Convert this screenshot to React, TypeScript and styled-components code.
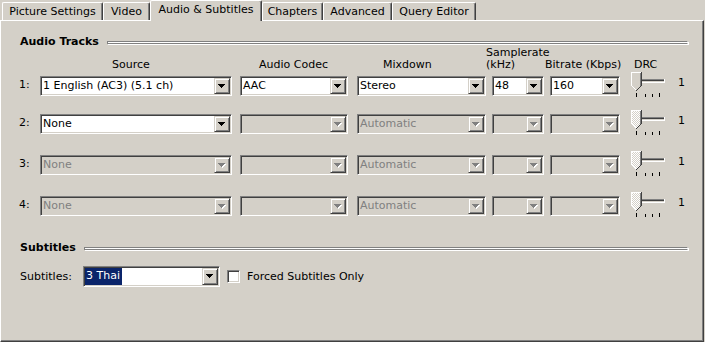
import React, { useId } from 'react';
import styled, { createGlobalStyle } from 'styled-components';

const Global = createGlobalStyle`
  html, body { margin: 0; padding: 0; background: #D4D0C8; }
  body {
    font-family: "DejaVu Sans", Verdana, sans-serif;
    font-size: 11px;
    color: #000;
  }
`;

const Window = styled.div`
  width: 705px;
  height: 342px;
  background: #D4D0C8;
  display: flex;
  flex-direction: column;
  overflow: hidden;
`;

const TabStrip = styled.div`
  display: flex;
  align-items: flex-start;
  height: 20px;
  padding-left: 2px;
  position: relative;
  z-index: 2;
`;

const Tab = styled.div<{ $w: number; $active?: boolean }>`
  box-sizing: border-box;
  width: ${p => p.$w}px;
  height: ${p => (p.$active ? 21 : 18)}px;
  margin-top: ${p => (p.$active ? 0 : 2)}px;
  background: #D4D0C8;
  border-top: 1px solid #fff;
  border-left: 1px solid #fff;
  border-right: 1px solid #404040;
  border-top-left-radius: 2px;
  border-top-right-radius: 2px;
  box-shadow: inset -1px 0 0 #808080;
  padding-top: 1px;
  line-height: 16px;
  text-align: center;
  white-space: nowrap;
`;

const Panel = styled.div`
  box-sizing: border-box;
  width: 704px;
  height: 322px;
  border-top: 1px solid #fff;
  border-left: 1px solid #fff;
  border-right: 1px solid #404040;
  border-bottom: 1px solid #404040;
  box-shadow: inset -1px -1px 0 #808080;
  padding: 15px 15px 0 18px;
  display: flex;
  flex-direction: column;
`;

const SectionHead = styled.div<{ $mt?: number }>`
  display: flex;
  align-items: center;
  height: 12px;
  margin-left: 1px;
  margin-top: ${p => p.$mt ?? 0}px;
`;

const SectionTitle = styled.span`
  font-weight: bold;
  line-height: 12px;
  white-space: nowrap;
`;

const Groove = styled.div`
  flex: 1;
  height: 1px;
  margin-left: 8px;
  background: #fff;
  border: 1px solid #808080;
  border-right-color: #fff;
  box-shadow: 1px 1px 0 #fff;
`;

const TrackGrid = styled.div<{ $mt: number; $header?: boolean }>`
  display: grid;
  grid-template-columns: 21px 200px 117px 135px 58px 81px 47px auto;
  align-items: ${p => (p.$header ? 'end' : 'start')};
  margin-top: ${p => p.$mt}px;
  height: ${p => (p.$header ? 24 : 20)}px;
`;

const ColHead = styled.div<{ $dx: number }>`
  margin-left: ${p => p.$dx}px;
  line-height: 12px;
  white-space: nowrap;
`;

const RowLabel = styled.div`
  line-height: 17px;
  white-space: nowrap;
`;

const ComboFrame = styled.div<{ $w: number; $h?: number }>`
  box-sizing: border-box;
  width: ${p => p.$w}px;
  height: ${p => p.$h ?? 20}px;
  display: flex;
  padding: 1px;
  border: 1px solid;
  border-color: #808080 #fff #fff #808080;
  box-shadow: inset 1px 1px 0 #404040, inset -1px -1px 0 #D4D0C8;
`;

const ComboField = styled.div<{ $disabled?: boolean; $lh: number }>`
  flex: 1;
  min-width: 0;
  overflow: hidden;
  white-space: nowrap;
  background: ${p => (p.$disabled ? '#D4D0C8' : '#fff')};
  color: ${p => (p.$disabled ? '#808080' : '#000')};
  line-height: ${p => p.$lh}px;
  padding-left: 1px;
`;

const Highlight = styled.span`
  display: inline-block;
  height: 100%;
  background: #0A246A;
  color: #fff;
  padding: 0 2px 0 1px;
  margin-left: -1px;
`;

const DropButton = styled.div`
  box-sizing: border-box;
  width: 16px;
  flex: none;
  background: #D4D0C8;
  border: 1px solid;
  border-color: #D4D0C8 #404040 #404040 #D4D0C8;
  box-shadow: inset 1px 1px 0 #fff, inset -1px -1px 0 #808080;
  display: flex;
  align-items: center;
  justify-content: center;
  svg { display: block; }
`;

const SliderBox = styled.div`
  height: 20px;
  svg { display: block; margin-top: -4px; }
`;

const ValueText = styled.div`
  line-height: 14px;
`;

const SubRow = styled.div`
  display: flex;
  align-items: center;
  margin-top: 12px;
  margin-left: 1px;
`;

const SubLabel = styled.div`
  width: 63px;
  white-space: nowrap;
  line-height: 17px;
`;

const CheckBox = styled.div`
  box-sizing: border-box;
  width: 13px;
  height: 13px;
  margin-left: 7px;
  background: #fff;
  border: 1px solid;
  border-color: #808080 #fff #fff #808080;
  box-shadow: inset 1px 1px 0 #404040, inset -1px -1px 0 #D4D0C8;
`;

const CheckText = styled.span`
  margin-left: 7px;
  white-space: nowrap;
`;

const Arrow = ({ disabled }: { disabled?: boolean }) => (
  <svg width="8" height="5" viewBox="0 0 8 5" shapeRendering="crispEdges">
    {disabled && (
      <g fill="#fff">
        <rect x="1" y="1" width="7" height="1" />
        <rect x="2" y="2" width="5" height="1" />
        <rect x="3" y="3" width="3" height="1" />
        <rect x="4" y="4" width="1" height="1" />
      </g>
    )}
    <g fill={disabled ? '#808080' : '#000'}>
      <rect x="0" y="0" width="7" height="1" />
      <rect x="1" y="1" width="5" height="1" />
      <rect x="2" y="2" width="3" height="1" />
      <rect x="3" y="3" width="1" height="1" />
    </g>
  </svg>
);

type ComboProps = {
  w: number;
  h?: number;
  value?: string;
  disabled?: boolean;
  selected?: boolean;
};

const Combo = ({ w, h, value = '', disabled, selected }: ComboProps) => (
  <ComboFrame $w={w} $h={h}>
    <ComboField $disabled={disabled} $lh={(h ?? 20) - 5}>
      {selected ? <Highlight>{value}</Highlight> : value}
    </ComboField>
    <DropButton>
      <Arrow disabled={disabled} />
    </DropButton>
  </ComboFrame>
);

const Slider = ({ disabled }: { disabled?: boolean }) => {
  const id = useId().replace(/:/g, '');
  return (
    <svg width="40" height="28" viewBox="0 0 40 28" shapeRendering="crispEdges">
      <defs>
        <pattern id={`d${id}`} width="2" height="2" patternUnits="userSpaceOnUse">
          <rect width="2" height="2" fill="#D4D0C8" />
          <rect width="1" height="1" fill="#fff" />
          <rect x="1" y="1" width="1" height="1" fill="#fff" />
        </pattern>
      </defs>
      <rect x="10" y="7" width="24" height="1" fill="#808080" />
      <rect x="10" y="8" width="23" height="1" fill="#404040" />
      <rect x="10" y="9" width="23" height="1" fill="#D4D0C8" />
      <rect x="10" y="10" width="24" height="1" fill="#fff" />
      <rect x="33" y="7" width="1" height="4" fill="#fff" />
      <polygon
        points="0,0 10,0 10,13 5,19 0,13"
        fill={disabled ? `url(#d${id})` : '#D4D0C8'}
        shapeRendering="auto"
      />
      <rect x="0" y="0" width="10" height="1" fill="#fff" />
      <rect x="0" y="0" width="1" height="14" fill="#fff" />
      <rect x="1" y="14" width="1" height="1" fill="#fff" />
      <rect x="2" y="15" width="1" height="1" fill="#fff" />
      <rect x="3" y="16" width="1" height="1" fill="#fff" />
      <rect x="4" y="17" width="1" height="1" fill="#fff" />
      <rect x="9" y="1" width="1" height="13" fill="#808080" />
      <rect x="10" y="0" width="1" height="14" fill="#404040" />
      <rect x="9" y="14" width="1" height="1" fill="#404040" />
      <rect x="8" y="15" width="1" height="1" fill="#404040" />
      <rect x="7" y="16" width="1" height="1" fill="#404040" />
      <rect x="6" y="17" width="1" height="1" fill="#404040" />
      <rect x="5" y="18" width="1" height="1" fill="#404040" />
      <rect x="5" y="21" width="1" height="4" fill="#000" />
      <rect x="14" y="22" width="1" height="3" fill="#000" />
      <rect x="21" y="22" width="1" height="3" fill="#000" />
      <rect x="28" y="21" width="1" height="4" fill="#000" />
    </svg>
  );
};

type Track = {
  n: number;
  mt: number;
  source: string;
  sourceOn: boolean;
  codec?: string;
  mix: string;
  rate?: string;
  bitrate?: string;
  on: boolean;
};

const tracks: Track[] = [
  { n: 1, mt: 5, source: '1 English (AC3) (5.1 ch)', sourceOn: true, codec: 'AAC', mix: 'Stereo', rate: '48', bitrate: '160', on: true },
  { n: 2, mt: 18, source: 'None', sourceOn: true, mix: 'Automatic', on: false },
  { n: 3, mt: 21, source: 'None', sourceOn: false, mix: 'Automatic', on: false },
  { n: 4, mt: 21, source: 'None', sourceOn: false, mix: 'Automatic', on: false },
];

export default function App() {
  return (
    <Window>
      <Global />
      <TabStrip>
        <Tab $w={101}>Picture Settings</Tab>
        <Tab $w={47}>Video</Tab>
        <Tab $w={112} $active>Audio &amp; Subtitles</Tab>
        <Tab $w={61}>Chapters</Tab>
        <Tab $w={69}>Advanced</Tab>
        <Tab $w={84}>Query Editor</Tab>
      </TabStrip>
      <Panel>
        <SectionHead>
          <SectionTitle>Audio Tracks</SectionTitle>
          <Groove />
        </SectionHead>
        <TrackGrid $header $mt={-1}>
          <span />
          <ColHead $dx={72}>Source</ColHead>
          <ColHead $dx={19}>Audio Codec</ColHead>
          <ColHead $dx={26}>Mixdown</ColHead>
          <ColHead $dx={-6}>
            Samplerate
            <br />
            (kHz)
          </ColHead>
          <ColHead $dx={-5}>Bitrate (Kbps)</ColHead>
          <ColHead $dx={3}>DRC</ColHead>
          <span />
        </TrackGrid>
        {tracks.map(t => (
          <TrackGrid key={t.n} $mt={t.mt}>
            <RowLabel>{t.n}:</RowLabel>
            <Combo w={192} value={t.source} disabled={!t.sourceOn} />
            <Combo w={108} value={t.codec} disabled={!t.on} />
            <Combo w={129} value={t.mix} disabled={!t.on} />
            <Combo w={52} value={t.rate} disabled={!t.on} />
            <Combo w={70} value={t.bitrate} disabled={!t.on} />
            <SliderBox>
              <Slider disabled={!t.on} />
            </SliderBox>
            <ValueText>1</ValueText>
          </TrackGrid>
        ))}
        <SectionHead $mt={26}>
          <SectionTitle>Subtitles</SectionTitle>
          <Groove />
        </SectionHead>
        <SubRow>
          <SubLabel>Subtitles:</SubLabel>
          <Combo w={137} h={21} value="3 Thai" selected />
          <CheckBox />
          <CheckText>Forced Subtitles Only</CheckText>
        </SubRow>
      </Panel>
    </Window>
  );
}
